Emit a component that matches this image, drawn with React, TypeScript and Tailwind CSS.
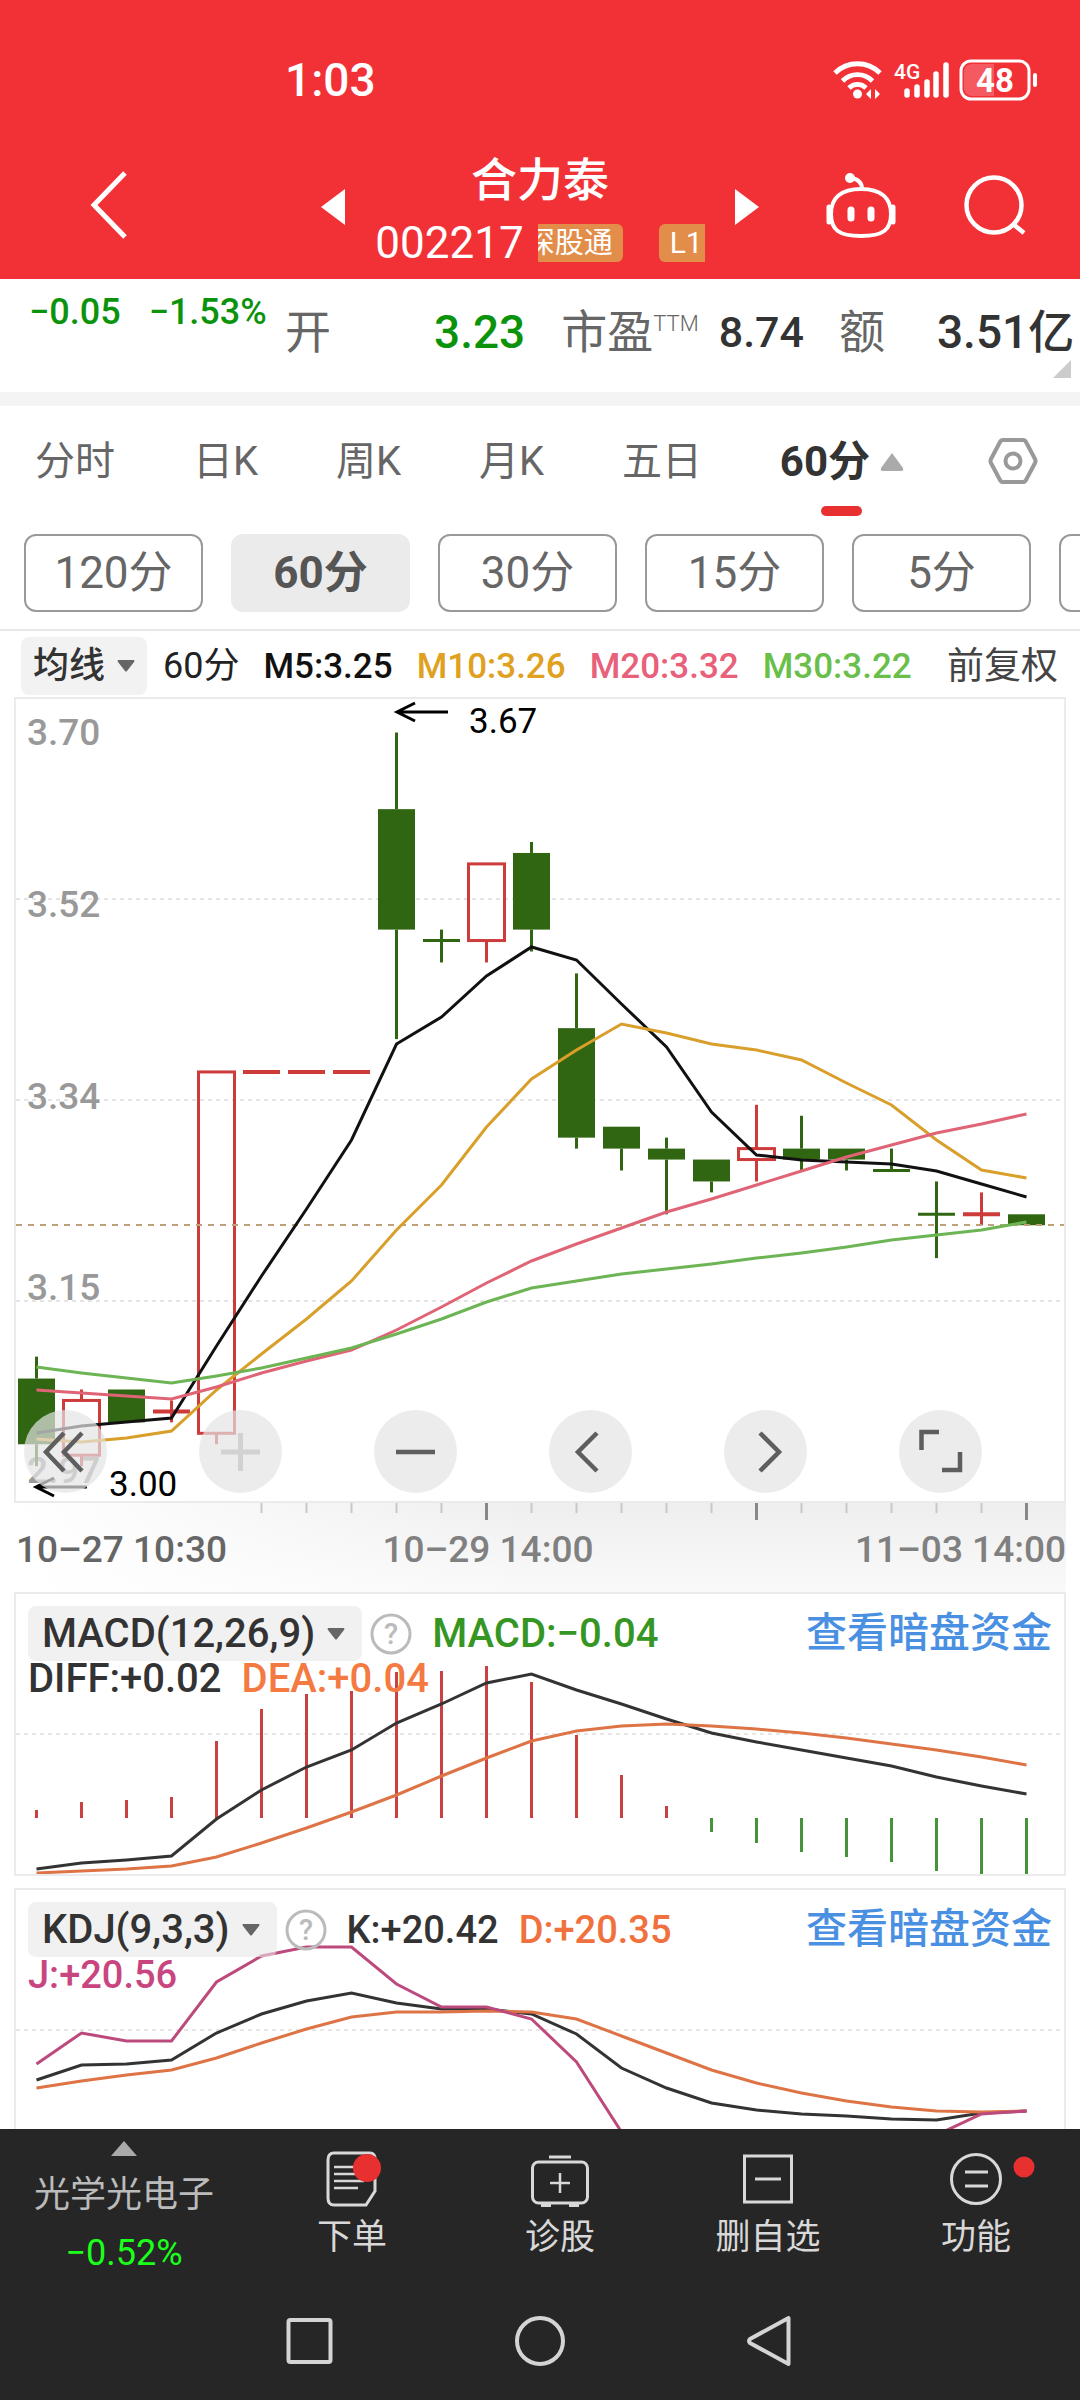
import type { ReactNode } from 'react'

type Candle = { up: boolean; open: number; close: number; high: number; low: number }

const STEP = 45
const xAt = (i: number) => 20.5 + i * STEP
const priceY = (p: number) => 33.5 + (3.67 - p) * 1095

const toPoints = (ys: number[]) => ys.map((y, i) => `${xAt(i)},${y}`).join(' ')

const c = (up: boolean, open: number, close: number, high: number, low: number): Candle => ({ up, open, close, high, low })

const candles: Candle[] = [
  c(false, 3.08, 3.02, 3.1, 3.0),
  c(true, 3.01, 3.06, 3.07, 3.0),
  c(false, 3.07, 3.04, 3.07, 3.04),
  c(true, 3.05, 3.05, 3.06, 3.04),
  c(true, 3.03, 3.36, 3.36, 3.02),
  c(true, 3.36, 3.36, 3.36, 3.36),
  c(true, 3.36, 3.36, 3.36, 3.36),
  c(true, 3.36, 3.36, 3.36, 3.36),
  c(false, 3.6, 3.49, 3.67, 3.39),
  c(false, 3.48, 3.48, 3.49, 3.46),
  c(true, 3.48, 3.55, 3.55, 3.46),
  c(false, 3.56, 3.49, 3.57, 3.47),
  c(false, 3.4, 3.3, 3.45, 3.29),
  c(false, 3.31, 3.29, 3.31, 3.27),
  c(false, 3.29, 3.28, 3.3, 3.23),
  c(false, 3.28, 3.26, 3.28, 3.25),
  c(true, 3.28, 3.29, 3.33, 3.26),
  c(false, 3.29, 3.28, 3.32, 3.27),
  c(false, 3.29, 3.28, 3.29, 3.27),
  c(false, 3.27, 3.27, 3.29, 3.27),
  c(false, 3.23, 3.23, 3.26, 3.19),
  c(true, 3.23, 3.23, 3.25, 3.22),
  c(false, 3.23, 3.22, 3.23, 3.22),
]

const averages = [
  { color: '#111111', ys: [734, 727, 723, 719, 647, 577, 510, 441, 345, 318, 277, 248, 261, 305, 348, 413, 456, 461, 463, 465, 472, 485, 498] },
  { color: '#d99f2b', ys: [740, 743, 739, 732, 691, 655, 620, 582, 531, 486, 428, 380, 351, 325, 334, 345, 351, 361, 384, 406, 441, 471, 479] },
  { color: '#df6475', ys: [691, 694, 697, 700, 688, 674, 662, 651, 631, 608, 584, 562, 545, 529, 513, 500, 486, 472, 458, 446, 434, 425, 415] },
  { color: '#6db554', ys: [668, 674, 679, 684, 677, 669, 659, 649, 635, 620, 603, 589, 582, 575, 570, 565, 559, 554, 548, 541, 536, 531, 523] },
]

const axisLabels = [
  { text: '3.70', y: 46 },
  { text: '3.52', y: 218 },
  { text: '3.34', y: 410 },
  { text: '3.15', y: 601 },
  { text: '2.97', y: 784 },
]

const MACD_ZERO = 224
const macdBars = [216, 208, 206, 203, 147, 115, 100, 97, 78, 77, 72, 88, 141, 181, 212, 238, 249, 258, 263, 268, 277, 280, 280]
const diff = [275, 269, 266, 262, 225, 196, 173, 156, 129, 110, 89, 80, 96, 110, 125, 139, 148, 156, 164, 172, 183, 192, 200]
const dea = [279, 277, 275, 272, 263, 249, 234, 218, 201, 182, 164, 147, 137, 132, 130, 132, 135, 139, 144, 150, 156, 163, 171]

const kLine = [190, 175, 174, 170, 143, 124, 111, 103, 113, 119, 119, 124, 144, 178, 198, 213, 220, 224, 226, 229, 230, 223, 221]
const dLine = [198, 191, 185, 180, 168, 153, 139, 127, 122, 122, 121, 122, 129, 146, 163, 180, 193, 203, 211, 217, 221, 222, 221]
const jLine = [174, 143, 151, 151, 92, 66, 57, 57, 94, 117, 117, 129, 172, 242, 300, 330, 340, 340, 330, 300, 245, 224, 221]

const tabs = ['分时', '日K', '周K', '月K', '五日']
const periods = ['120分', '60分', '30分', '15分', '5分', '1分']

function StatusBar() {
  return (
    <div className="flex h-40 items-center justify-between pr-[41px] pl-[285px] text-white">
      <span className="text-[46px] leading-none font-medium">1:03</span>
      <div className="flex items-center">
        <svg className="h-10 w-[50px]" viewBox="0 0 50 40" fill="none" stroke="#fff" strokeWidth="4.8">
          <path d="M2 13a32 32 0 0 1 45 0" />
          <path d="M9.500 21a21 21 0 0 1 30 0" />
          <path d="M16 28a12 12 0 0 1 17 0" />
          <circle cx="24.500" cy="34" r="4.500" fill="#fff" stroke="none" />
          <path d="M33 34l5-5v10zM47 34l-5-5v10z" fill="#fff" stroke="none" />
        </svg>
        <svg className="ml-2.5 h-11 w-[56px]" viewBox="0 0 56 44" fill="none" stroke="#fff" strokeWidth="6" strokeLinecap="round">
          <text x="1" y="21" fontSize="21" fontWeight="500" fill="#fff" stroke="none">4G</text>
          <path d="M14 33v4M24 29v8M34 24v13M43 16v21M53 7v30" strokeWidth="5.500" />
        </svg>
        <svg className="ml-2.5 h-11 w-[80px]" viewBox="0 0 80 44">
          <rect x="2" y="3" width="68" height="38" rx="10" fill="none" stroke="#fff" strokeWidth="3" />
          <path d="M35 6H13a8 8 0 0 0-8 8v16a8 8 0 0 0 8 8h22z" fill="#fff" opacity="0.2" />
          <path d="M76 17v10" stroke="#fff" strokeWidth="4" strokeLinecap="round" />
          <text x="36" y="34" fontSize="33" fontWeight="700" fill="#fff" textAnchor="middle">48</text>
        </svg>
      </div>
    </div>
  )
}

function TitleBar() {
  return (
    <div className="grid h-[119px] grid-cols-[321px_1fr_321px] text-white">
      <div className="flex items-start pt-[10px] pl-[88px]">
        <button aria-label="返回">
          <svg className="h-[70px] w-[42px]" viewBox="0 0 42 70" fill="none" stroke="#fff" strokeWidth="5">
            <path d="M37 3L6 35l31 32" />
          </svg>
        </button>
      </div>
      <div className="flex justify-between">
        <button aria-label="上一只" className="h-[94px]">
          <svg className="h-9 w-6" viewBox="0 0 24 36" fill="#fff">
            <path d="M24 0v36L0 18z" />
          </svg>
        </button>
        <div className="flex flex-col items-center">
          <h1 className="text-[46px] leading-[40px] font-medium">合力泰</h1>
          <div className="mt-[19px] flex items-center">
            <span className="text-[44px] leading-[48px]">002217</span>
            <span className="ml-[14px] flex h-[38px] w-[85px] items-center justify-end overflow-hidden rounded-r-md bg-[#e38d4b] pr-[10px] text-[29px] leading-none whitespace-nowrap">
              深股通
            </span>
            <span className="ml-9 flex h-[38px] w-[46px] items-center overflow-hidden rounded-l-md bg-[#e38d4b] pl-[11px] text-[30px] leading-none">
              L1
            </span>
          </div>
        </div>
        <button aria-label="下一只" className="h-[94px]">
          <svg className="h-9 w-6" viewBox="0 0 24 36" fill="#fff">
            <path d="M0 0v36l24-18z" />
          </svg>
        </button>
      </div>
      <div className="flex items-start justify-end gap-[66px] pt-[11px] pr-[53px]">
        <button aria-label="智能助手">
          <svg className="h-[68px] w-[72px]" viewBox="0 0 72 68" fill="none" stroke="#fff" strokeWidth="4">
            <path d="M37 18c0-7-4-10-11-11" />
            <circle cx="25" cy="7" r="5" fill="#fff" stroke="none" />
            <path d="M36 18c20 0 30 9 30 25s-8 22-30 22S6 59 6 43s10-25 30-25z" />
            <path d="M4 36v15M68 36v15" strokeWidth="5" strokeLinecap="round" />
            <path d="M26 39v8M46 39v8" strokeWidth="7" strokeLinecap="round" />
          </svg>
        </button>
        <button aria-label="搜索">
          <svg className="h-[66px] w-[64px]" viewBox="0 0 64 66" fill="none" stroke="#fff" strokeWidth="4.5">
            <circle cx="31" cy="34" r="27.500" />
            <path d="M50 53l11 9" />
          </svg>
        </button>
      </div>
    </div>
  )
}

function Quotes() {
  return (
    <section className="relative flex h-[113px] items-start bg-white pl-[29px] text-[46px] leading-[46px] font-medium whitespace-nowrap text-[#333]">
      <div className="flex w-[256px] gap-7 pt-[15px] text-[36px] leading-[36px] text-[#0c930c]">
        <span>−0.05</span>
        <span>−1.53%</span>
      </div>
      <dl className="flex pt-[30px]">
        <dt className="w-[149px] font-normal text-[#666]">开</dt>
        <dd className="text-[#0c930c]">3.23</dd>
        <dt className="ml-9 flex font-normal text-[#666]">
          市盈<sup className="top-0 pt-0.5 text-[22px] leading-[26px] font-light">TTM</sup>
        </dt>
        <dd className="ml-5 text-[43px]">8.74</dd>
        <dt className="ml-[35px] font-normal text-[#666]">额</dt>
        <dd className="ml-[52px]">3.51亿</dd>
      </dl>
      <svg className="absolute right-[9px] bottom-[14px] h-[18px] w-[18px]" viewBox="0 0 18 18">
        <path d="M18 0v18H0z" fill="#ccc" />
      </svg>
    </section>
  )
}

function PeriodTabs() {
  return (
    <nav className="flex h-[118px] items-start pr-[42px] pl-[35px] text-[40px] text-[#666]">
      <div className="flex flex-1 items-start justify-between pt-8">
        {tabs.map(t => (
          <button key={t} className="leading-[48px]">{t}</button>
        ))}
        <button className="flex flex-col items-center font-bold text-[#333]">
          <span className="flex items-center gap-[10px] text-[42px] leading-[48px]">
            60分
            <svg className="h-5 w-6" viewBox="0 0 24 20" fill="#aaa">
              <path d="M12 1l11 15q1 3-2 3H3q-3 0-2-3z" />
            </svg>
          </span>
          <span className="mt-[20px] h-[10px] w-[41px] rounded-full bg-[#e93030]" />
        </button>
      </div>
      <button aria-label="设置" className="mt-[31px] ml-[84px]">
        <svg className="h-12 w-[50px]" viewBox="0 0 50 48" fill="none" stroke="#999" strokeWidth="4">
          <path d="M15 3h20q2 0 3 2l9 17q1 2 0 4l-9 17q-1 2-3 2H15q-2 0-3-2L3 26q-1-2 0-4l9-17q1-2 3-2z" />
          <circle cx="25" cy="24" r="7.500" />
        </svg>
      </button>
    </nav>
  )
}

function PeriodPills() {
  return (
    <div className="flex gap-7 overflow-hidden border-b-2 border-[#e8e8e8] pt-[10px] pb-[17px] pl-6">
      {periods.map(p => (
        <button
          key={p}
          className={
            p === '60分'
              ? 'h-[78px] w-[179px] shrink-0 rounded-xl bg-[#ebebeb] text-[44px] leading-none font-bold text-[#555]'
              : 'h-[78px] w-[179px] shrink-0 rounded-xl border-2 border-[#999] text-[44px] leading-none text-[#666]'
          }
        >
          {p}
        </button>
      ))}
    </div>
  )
}

function Caret() {
  return (
    <svg className="h-3 w-[18px]" viewBox="0 0 18 12" fill="#666">
      <path d="M1 0h16q1 1 0 2l-7 9q-1 1-2 0L1 2q-1-1 0-2z" />
    </svg>
  )
}

function AverageLegend() {
  return (
    <div className="flex h-[66px] items-center gap-6 pt-1 pr-[22px] pl-[21px] text-[35px] leading-none font-medium whitespace-nowrap">
      <button className="-mr-2 flex h-[58px] items-center gap-3 rounded-lg bg-[#f2f2f2] px-3 text-[36px] text-[#333]">
        均线
        <Caret />
      </button>
      <span className="text-[36px] font-normal text-[#222]">60分</span>
      <span className="text-[#111]">M5:3.25</span>
      <span className="text-[#e0a020]">M10:3.26</span>
      <span className="text-[#e8607a]">M20:3.32</span>
      <span className="text-[#6abf4b]">M30:3.22</span>
      <button className="ml-auto text-[37px] font-normal text-[#444]">前复权</button>
    </div>
  )
}

function CandleShape({ candle, x }: { candle: Candle; x: number }) {
  const top = priceY(Math.max(candle.open, candle.close))
  const bottom = priceY(Math.min(candle.open, candle.close))
  const high = priceY(candle.high)
  const low = priceY(candle.low)
  const color = candle.up ? '#cd3b3b' : '#306612'
  const flat = bottom - top < 1

  return (
    <g stroke={color} strokeWidth="3">
      {high < top && <path d={`M${x} ${high}V${top}`} />}
      {low > bottom && <path d={`M${x} ${bottom}V${low}`} />}
      {flat && <path d={`M${x - 18.500} ${top}h37`} strokeWidth={candle.up ? 4 : 3} />}
      {!flat && candle.up && <rect x={x - 18} y={top} width="36" height={bottom - top} fill="none" />}
      {!flat && !candle.up && <rect x={x - 18.500} y={top} width="37" height={bottom - top} fill={color} stroke="none" />}
    </g>
  )
}

function RoundButton({ label, children }: { label: string; children: ReactNode }) {
  return (
    <button aria-label={label} className="size-[83px] rounded-full bg-[#e4e4e4]/70">
      <svg className="size-full" viewBox="0 0 83 83" fill="none" stroke="#5e5e5e" strokeWidth="4.5">
        {children}
      </svg>
    </button>
  )
}

function PriceChart() {
  return (
    <section className="relative mx-[14px] border-2 border-[#ebebeb]">
      <svg className="block h-auto w-full" viewBox="0 0 1048 802" fill="none">
        <g stroke="#dcdcdc" strokeWidth="1.500" strokeDasharray="4 4">
          <path d="M0 200h1048M0 401h1048M0 602h1048" />
        </g>
        <g fontSize="37" fontWeight="500" fill="#999">
          {axisLabels.map(l => (
            <text key={l.text} x="11" y={l.y}>{l.text}</text>
          ))}
        </g>
        {candles.map((candle, i) => (
          <CandleShape key={i} candle={candle} x={xAt(i)} />
        ))}
        <path d="M0 526h1048" stroke="#bfa27a" strokeWidth="2" strokeDasharray="6 6" />
        {averages.map(a => (
          <polyline key={a.color} points={toPoints(a.ys)} stroke={a.color} strokeWidth="3" />
        ))}
        <g stroke="#000" strokeWidth="3">
          <path d="M432 13h-50M399 4l-18 9 18 9" />
          <path d="M71 788H21M38 779l-18 9 18 9" />
        </g>
        <g fontSize="35" fill="#000">
          <text x="453" y="34">3.67</text>
          <text x="93" y="797">3.00</text>
        </g>
      </svg>
      <div className="absolute right-[82px] bottom-[8px] left-[8px] flex justify-between">
        <RoundButton label="后退">
          <path d="M40 23L22 42l18 19M58 23L40 42l18 19" />
        </RoundButton>
        <RoundButton label="放大">
          <path d="M22 42h39M41.500 23v38" stroke="#d2d2d2" strokeWidth="5" />
        </RoundButton>
        <RoundButton label="缩小">
          <path d="M22 42h39" />
        </RoundButton>
        <RoundButton label="左移">
          <path d="M48 23L29 42l19 19" />
        </RoundButton>
        <RoundButton label="右移">
          <path d="M36 23l19 19-19 19" />
        </RoundButton>
        <RoundButton label="全屏">
          <path d="M40 22H22.500v18M43 60h18V42" />
        </RoundButton>
      </div>
    </section>
  )
}

function TimeAxis() {
  return (
    <div className="mx-[14px] h-[89px] bg-linear-to-b from-[#eeeeee] to-[#fafafa]">
      <div className="h-full bg-linear-to-r from-white via-white/60 via-20% to-transparent to-50%">
        <svg className="block h-auto w-full" viewBox="-2 0 1052 17">
          {candles.map((_, i) => {
            if (i < 5) return null
            const major = i === 10 || i === 16 || i === 22
            return <path key={i} d={`M${xAt(i)} 0v${major ? 17 : 10}`} stroke={major ? '#888' : '#c8c8c8'} strokeWidth={major ? 3 : 2} />
          })}
        </svg>
        <div className="flex justify-between pt-2 pl-[2px] text-[37px] leading-[44px] font-medium text-[#808080]">
          <span className="text-[#666]">10–27 10:30</span>
          <span className="pr-[106px]">10–29 14:00</span>
          <span>11–03 14:00</span>
        </div>
      </div>
    </div>
  )
}

function IndicatorHeader({ name, first, second }: { name: string; first: ReactNode; second: ReactNode }) {
  return (
    <div className="absolute inset-x-0 top-3 px-3 text-[40px] leading-none font-medium whitespace-nowrap text-[#333]">
      <div className="flex h-[55px] items-center">
        <button className="flex h-[55px] items-center gap-3 rounded-lg bg-[#e8e8e8]/60 pr-[17px] pl-[14px]">
          {name}
          <Caret />
        </button>
        <button aria-label={`${name} 说明`} className="mr-5 ml-2">
          <svg className="size-[42px]" viewBox="0 0 42 42">
            <circle cx="21" cy="21" r="19" fill="none" stroke="#bbb" strokeWidth="3" />
            <text x="21" y="31" fontSize="29" fill="#bbb" textAnchor="middle">?</text>
          </svg>
        </button>
        {first}
        <a href="#dark-pool" className="ml-auto text-[41px] text-[#4a90e2]">查看暗盘资金</a>
      </div>
      <div className="leading-9">{second}</div>
    </div>
  )
}

function MacdPanel() {
  return (
    <section className="relative mx-[14px] border-2 border-[#ebebeb]">
      <svg className="block h-auto w-full" viewBox="0 0 1048 280" fill="none">
        <path d="M0 140h1048" stroke="#e6e6e6" strokeWidth="2" strokeDasharray="4 4" />
        {macdBars.map((y, i) => (
          <path key={i} d={`M${xAt(i)} ${MACD_ZERO}V${y}`} stroke={y < MACD_ZERO ? '#cb4141' : '#46943a'} strokeWidth="3" />
        ))}
        <polyline points={toPoints(diff)} stroke="#333" strokeWidth="3" />
        <polyline points={toPoints(dea)} stroke="#de7446" strokeWidth="3" />
      </svg>
      <IndicatorHeader
        name="MACD(12,26,9)"
        first={<span className="text-[#369624]">MACD:−0.04</span>}
        second={
          <div className="flex gap-5">
            <span>DIFF:+0.02</span>
            <span className="text-[#f47a42]">DEA:+0.04</span>
          </div>
        }
      />
    </section>
  )
}

function KdjPanel() {
  return (
    <section className="relative mx-[14px] mt-3 overflow-hidden border-2 border-b-0 border-[#ebebeb]">
      <svg className="block h-auto w-full" viewBox="0 0 1048 239" fill="none">
        <path d="M0 140h1048" stroke="#e6e6e6" strokeWidth="2" strokeDasharray="4 4" />
        <polyline points={toPoints(kLine)} stroke="#333" strokeWidth="3" />
        <polyline points={toPoints(dLine)} stroke="#de7446" strokeWidth="3" />
        <polyline points={toPoints(jLine)} stroke="#bd4a7c" strokeWidth="3" />
      </svg>
      <IndicatorHeader
        name="KDJ(9,3,3)"
        first={
          <div className="flex gap-5 text-[38px]">
            <span>K:+20.42</span>
            <span className="text-[#f0713e]">D:+20.35</span>
          </div>
        }
        second={<span className="text-[38px] text-[#c94580]">J:+20.56</span>}
      />
    </section>
  )
}

function BarItem({ label, children }: { label: string; children: ReactNode }) {
  return (
    <button className="flex flex-col items-center justify-start pt-5 text-[35px] leading-[42px] text-[#d8d8d8]">
      <svg className="h-[60px] w-[120px]" viewBox="0 0 120 60" fill="none" stroke="#d8d8d8" strokeWidth="3">
        {children}
      </svg>
      <span className="mt-2">{label}</span>
    </button>
  )
}

function BottomBar() {
  return (
    <footer className="bg-[#262626]">
      <div className="grid h-[166px] grid-cols-[248px_repeat(4,1fr)]">
        <button className="flex flex-col items-center pt-3 text-[36px] leading-[42px] whitespace-nowrap text-[#bbb]">
          <svg className="h-[15px] w-[26px]" viewBox="0 0 26 15" fill="#aaa">
            <path d="M13 0l13 15H0z" />
          </svg>
          <span className="mt-[18px]">光学光电子</span>
          <span className="mt-4 text-[#1bff1b]">−0.52%</span>
        </button>
        <BarItem label="下单">
          <path d="M42 4h36q5 0 5 6v32L74 56H42q-6 0-6-7V11q0-7 6-7z" />
          <path d="M42 18h20M42 25h22M42 32h30M42 39h24" strokeWidth="2.500" />
          <circle cx="75" cy="19" r="14" fill="#e93030" stroke="none" />
        </BarItem>
        <BarItem label="诊股">
          <path d="M49 8h22" />
          <rect x="32.500" y="13" width="55" height="41" rx="6" />
          <path d="M50 34h20M60 24v20" strokeWidth="2.500" />
          <path d="M41 56h10M69 56h10" strokeWidth="4" />
        </BarItem>
        <BarItem label="删自选">
          <rect x="36.500" y="7" width="47" height="46" />
          <path d="M47 30h26" />
        </BarItem>
        <BarItem label="功能">
          <circle cx="60" cy="30" r="24.500" />
          <path d="M49 23h23M49 37h23" />
          <circle cx="108" cy="18" r="10.500" fill="#e93030" stroke="none" />
        </BarItem>
      </div>
      <div className="flex h-[105px] justify-center gap-[174px] pt-[18px]">
        <button aria-label="最近任务" className="size-[56px]">
          <svg className="size-full" viewBox="0 0 56 56" fill="none" stroke="#d4d4d4" strokeWidth="4">
            <rect x="6.500" y="7" width="42" height="42" rx="2" />
          </svg>
        </button>
        <button aria-label="主屏幕" className="size-[56px]">
          <svg className="size-full" viewBox="0 0 56 56" fill="none" stroke="#d4d4d4" strokeWidth="4">
            <circle cx="28" cy="28" r="23" />
          </svg>
        </button>
        <button aria-label="后退键" className="size-[56px]">
          <svg className="size-full" viewBox="0 0 56 56" fill="none" stroke="#d4d4d4" strokeWidth="4" strokeLinejoin="round">
            <path d="M46.500 5v46L8 30q-2-2 0-4z" />
          </svg>
        </button>
      </div>
    </footer>
  )
}

export default function App() {
  return (
    <div className="bg-white font-['Roboto','Noto_Sans_CJK_SC',sans-serif]">
      <header className="bg-[#f23137]">
        <StatusBar />
        <TitleBar />
      </header>
      <main>
        <Quotes />
        <div className="h-[14px] bg-[#f4f4f4]" />
        <PeriodTabs />
        <PeriodPills />
        <AverageLegend />
        <PriceChart />
        <TimeAxis />
        <MacdPanel />
        <KdjPanel />
      </main>
      <BottomBar />
    </div>
  )
}
